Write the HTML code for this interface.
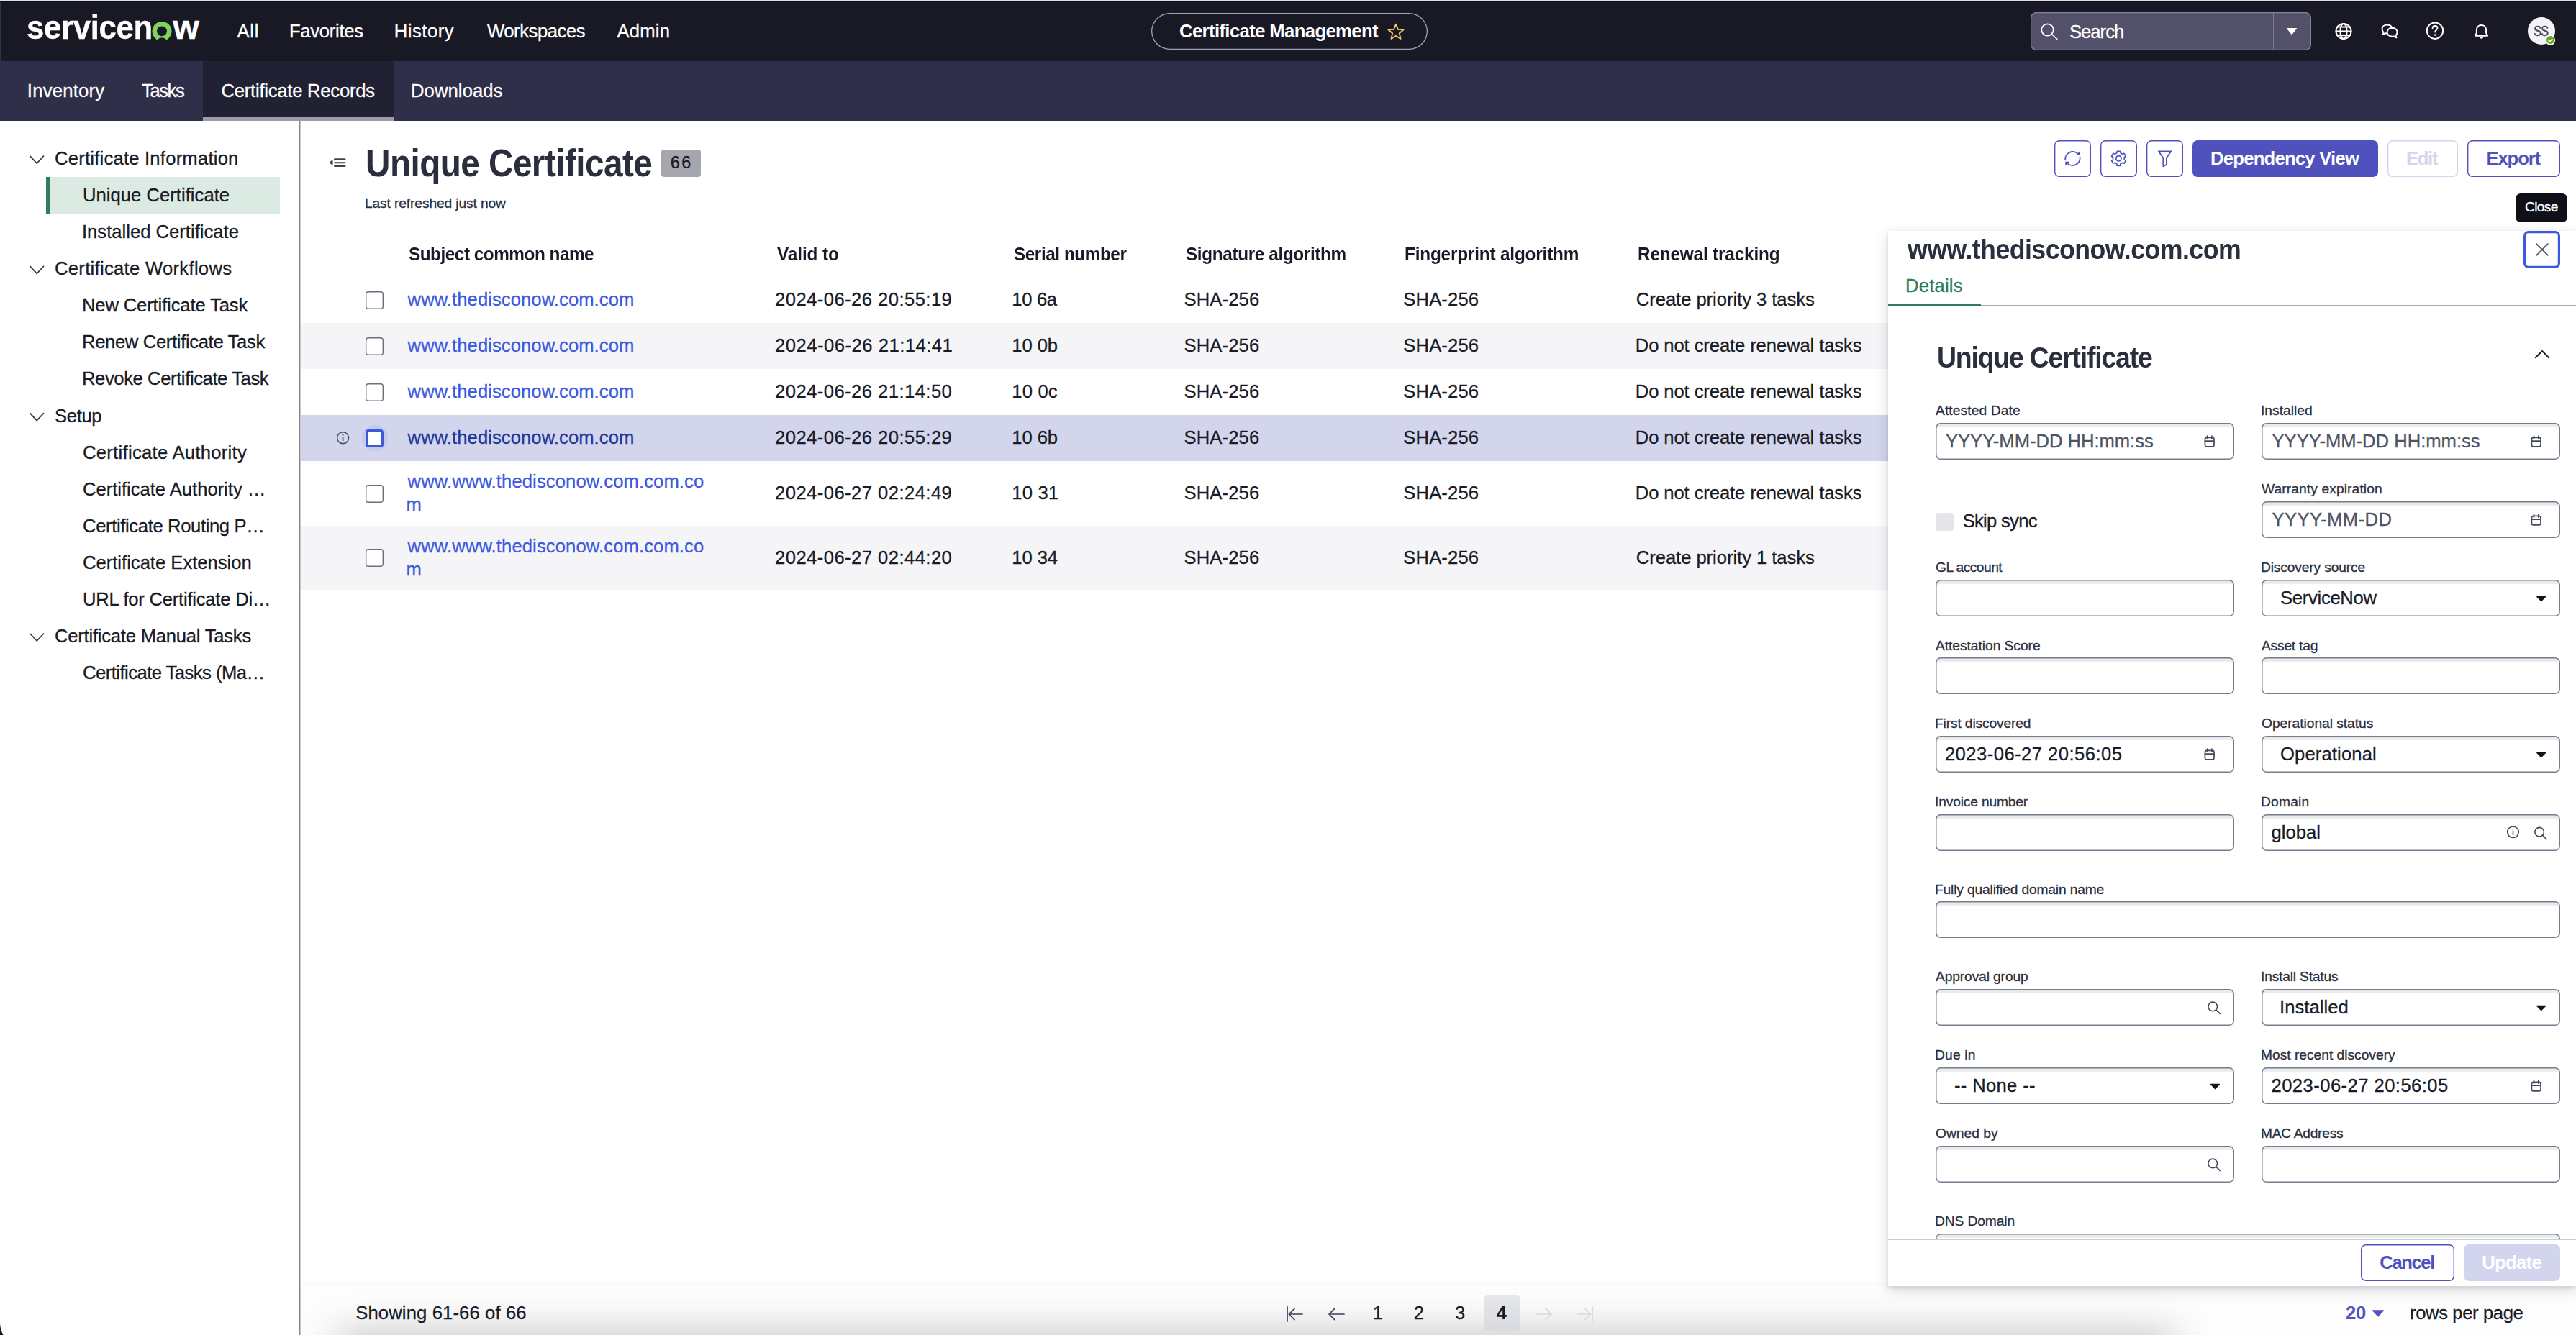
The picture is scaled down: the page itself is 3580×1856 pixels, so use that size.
<!DOCTYPE html>
<html lang="en"><head><meta charset="utf-8"><title>Unique Certificate | ServiceNow</title>
<style>

html,body{margin:0;padding:0;}
body{width:3580px;height:1856px;overflow:hidden;background:#fff;position:relative;font-family:'Liberation Sans',sans-serif;color:#181b26;}
.t{position:absolute;white-space:pre;font-family:'Liberation Sans',sans-serif;-webkit-text-stroke:0.3px currentColor;}
.b{position:absolute;box-sizing:border-box;}
.in{position:absolute;box-sizing:border-box;height:51px;border-radius:7px;background:#fff;box-shadow:inset 0 0 0 1.5px #767c8e,inset 0 5.8px 0 0 #e9ebeb;}
.cb{position:absolute;box-sizing:border-box;width:25px;height:25px;border-radius:4px;background:#fff;box-shadow:inset 0 0 0 1.4px #6b6f7c;}
.ib{position:absolute;box-sizing:border-box;height:51px;border-radius:7px;background:#fff;box-shadow:inset 0 0 0 1.4px #4f52bd;}
svg.ov{position:absolute;left:0;top:0;width:3580px;height:1856px;overflow:visible;}

</style></head>
<body>
<div class="b" style="left:0px;top:0px;width:3580px;height:2px;background:linear-gradient(180deg,#dddee0,#e8e9e9)"></div>
<div class="b" style="left:0px;top:2px;width:3580px;height:83px;background:#191926;border-top:1px solid #0b0b19"></div>
<div class="b" style="left:0px;top:3px;width:1px;height:165px;background:rgba(255,255,255,0.12)"></div>
<div class="b" style="left:0px;top:85px;width:3580px;height:83px;background:#2f2f49"></div>
<div class="b" style="left:282px;top:85px;width:265px;height:83px;background:#212134;border-bottom:6px solid #9c9cab"></div>
<span class="t" style="left:37.1px;top:8.3px;font-size:47px;line-height:60px;color:#fff;font-weight:700;-webkit-text-stroke:0;letter-spacing:-0.346px;transform:scaleX(0.93);transform-origin:0 0;-webkit-text-stroke:0.35px #fff;">servicen</span>
<span class="t" style="left:240.3px;top:8.3px;font-size:47px;line-height:60px;color:#fff;font-weight:700;-webkit-text-stroke:0;-webkit-text-stroke:0.35px #fff;">w</span>
<span class="t" style="left:329.5px;top:27.0px;font-size:25.6px;line-height:32px;color:#fff;letter-spacing:0.772px;">All</span>
<span class="t" style="left:402.0px;top:27.0px;font-size:25.6px;line-height:32px;color:#fff;letter-spacing:-0.282px;">Favorites</span>
<span class="t" style="left:547.7px;top:27.0px;font-size:25.6px;line-height:32px;color:#fff;letter-spacing:0.528px;">History</span>
<span class="t" style="left:677.0px;top:27.0px;font-size:25.6px;line-height:32px;color:#fff;letter-spacing:-0.416px;">Workspaces</span>
<span class="t" style="left:857.5px;top:27.0px;font-size:25.6px;line-height:32px;color:#fff;letter-spacing:0.222px;">Admin</span>
<span class="t" style="left:37.8px;top:110.1px;font-size:25.6px;line-height:32px;color:#fff;letter-spacing:0.253px;">Inventory</span>
<span class="t" style="left:197.0px;top:110.1px;font-size:25.6px;line-height:32px;color:#fff;letter-spacing:-1.406px;">Tasks</span>
<span class="t" style="left:307.5px;top:110.1px;font-size:25.6px;line-height:32px;color:#fff;letter-spacing:-0.229px;">Certificate Records</span>
<span class="t" style="left:571.0px;top:110.1px;font-size:25.6px;line-height:32px;color:#fff;letter-spacing:0.110px;">Downloads</span>
<div class="b" style="left:1600px;top:18px;width:384px;height:51px;box-shadow:inset 0 0 0 1.3px #a3a3b0;border-radius:26px"></div>
<span class="t" style="left:1639.0px;top:26.6px;font-size:25.6px;line-height:32px;color:#fff;font-weight:700;-webkit-text-stroke:0;letter-spacing:-0.581px;">Certificate Management</span>
<div class="b" style="left:2822px;top:17px;width:390px;height:53px;background:#535069;box-shadow:inset 0 0 0 1.2px #858399;border-radius:8px"></div>
<div class="b" style="left:3158.5px;top:18px;width:1.5px;height:51px;background:#7c7a90"></div>
<span class="t" style="left:2876.0px;top:28.0px;font-size:25.6px;line-height:32px;color:#fff;letter-spacing:-0.972px;">Search</span>
<div class="b" style="left:3513px;top:24px;width:38px;height:38px;background:#f3f3f7;border-radius:50%"></div>
<span class="t" style="left:3521.4px;top:29.9px;font-size:20.5px;line-height:26px;color:#3b4352;letter-spacing:-1.551px;transform:scaleX(0.82);transform-origin:0 0;">SS</span>
<div class="b" style="left:3537.7px;top:49.2px;width:13.4px;height:13.4px;background:#fff;border-radius:50%"></div>
<div class="b" style="left:3538.9px;top:50.4px;width:11px;height:11px;background:#62a82a;border-radius:50%"></div>
<div class="b" style="left:415px;top:168px;width:2px;height:1688px;background:#85858f"></div>
<div class="b" style="left:417px;top:168px;width:1px;height:1688px;background:#c9c9d2"></div>
<div class="b" style="left:64px;top:246px;width:325px;height:51px;background:#dbeae3"></div>
<div class="b" style="left:64px;top:246px;width:6px;height:51px;background:#2e7d5b"></div>
<span class="t" style="left:76.0px;top:204.0px;font-size:25.6px;line-height:32px;color:#181b26;letter-spacing:0.226px;">Certificate Information</span>
<span class="t" style="left:115.0px;top:255.1px;font-size:25.6px;line-height:32px;color:#181b26;letter-spacing:0.036px;">Unique Certificate</span>
<span class="t" style="left:114.0px;top:306.1px;font-size:25.6px;line-height:32px;color:#181b26;letter-spacing:0.014px;">Installed Certificate</span>
<span class="t" style="left:76.0px;top:357.2px;font-size:25.6px;line-height:32px;color:#181b26;letter-spacing:0.306px;">Certificate Workflows</span>
<span class="t" style="left:114.0px;top:408.3px;font-size:25.6px;line-height:32px;color:#181b26;letter-spacing:-0.135px;">New Certificate Task</span>
<span class="t" style="left:114.0px;top:459.4px;font-size:25.6px;line-height:32px;color:#181b26;letter-spacing:-0.335px;">Renew Certificate Task</span>
<span class="t" style="left:114.0px;top:510.4px;font-size:25.6px;line-height:32px;color:#181b26;letter-spacing:-0.397px;">Revoke Certificate Task</span>
<span class="t" style="left:76.0px;top:561.5px;font-size:25.6px;line-height:32px;color:#181b26;letter-spacing:-0.337px;">Setup</span>
<span class="t" style="left:115.0px;top:612.6px;font-size:25.6px;line-height:32px;color:#181b26;letter-spacing:0.294px;">Certificate Authority</span>
<span class="t" style="left:115.0px;top:663.6px;font-size:25.6px;line-height:32px;color:#181b26;letter-spacing:-0.011px;">Certificate Authority …</span>
<span class="t" style="left:115.0px;top:714.7px;font-size:25.6px;line-height:32px;color:#181b26;letter-spacing:-0.358px;">Certificate Routing P…</span>
<span class="t" style="left:115.0px;top:765.8px;font-size:25.6px;line-height:32px;color:#181b26;">Certificate Extension</span>
<span class="t" style="left:115.0px;top:816.8px;font-size:25.6px;line-height:32px;color:#181b26;letter-spacing:-0.226px;">URL for Certificate Di…</span>
<span class="t" style="left:76.0px;top:867.9px;font-size:25.6px;line-height:32px;color:#181b26;letter-spacing:-0.222px;">Certificate Manual Tasks</span>
<span class="t" style="left:115.0px;top:919.0px;font-size:25.6px;line-height:32px;color:#181b26;letter-spacing:-0.525px;">Certificate Tasks (Ma…</span>
<span class="t" style="left:507.6px;top:194.9px;font-size:53px;line-height:64px;color:#2a2e3d;font-weight:700;-webkit-text-stroke:0;letter-spacing:-0.617px;transform:scaleX(0.9);transform-origin:0 0;">Unique Certificate</span>
<div class="b" style="left:919px;top:208px;width:55px;height:38px;background:#a6a6ae;border-radius:4px"></div>
<span class="t" style="left:931.8px;top:212.1px;font-size:23.5px;line-height:29px;color:#181b26;letter-spacing:2.330px;">66</span>
<span class="t" style="left:507.0px;top:270.9px;font-size:19.2px;line-height:24px;color:#2a2e3d;letter-spacing:-0.115px;">Last refreshed just now</span>
<div class="ib" style="left:2855px;top:195px;width:51px;height:51px;"></div>
<div class="ib" style="left:2919px;top:195px;width:51px;height:51px;"></div>
<div class="ib" style="left:2983px;top:195px;width:51px;height:51px;"></div>
<div class="b" style="left:3047px;top:195px;width:258px;height:51px;background:#4f52bd;border-radius:7px"></div>
<span class="t" style="left:3072.0px;top:203.6px;font-size:25.6px;line-height:32px;color:#fff;font-weight:700;-webkit-text-stroke:0;letter-spacing:-0.732px;">Dependency View</span>
<div class="ib" style="left:3318px;top:195px;width:98px;height:51px;box-shadow:inset 0 0 0 1.4px #d3d4ee"></div>
<span class="t" style="left:3344.0px;top:203.6px;font-size:25.6px;line-height:32px;color:#d3d4ee;font-weight:700;-webkit-text-stroke:0;letter-spacing:-1.372px;">Edit</span>
<div class="ib" style="left:3429px;top:195px;width:129px;height:51px;"></div>
<span class="t" style="left:3455.4px;top:203.6px;font-size:25.6px;line-height:32px;color:#4f52bd;font-weight:700;-webkit-text-stroke:0;letter-spacing:-1.066px;">Export</span>
<div class="b" style="left:3496px;top:269px;width:72px;height:40px;background:#0f1017;border-radius:7px"></div>
<span class="t" style="left:3509.0px;top:276.2px;font-size:19.2px;line-height:24px;color:#fff;letter-spacing:-0.671px;">Close</span>
<div class="b" style="left:418px;top:449px;width:3162px;height:64px;background:#f5f5f7"></div>
<div class="b" style="left:418px;top:577px;width:3162px;height:64px;background:#d3d5ec"></div>
<div class="b" style="left:418px;top:731px;width:3162px;height:89px;background:#f5f5f7"></div>
<span class="t" style="left:568.0px;top:336.8px;font-size:25.6px;line-height:32px;color:#181b26;font-weight:700;-webkit-text-stroke:0;letter-spacing:-0.499px;transform:scaleX(0.95);transform-origin:0 0;">Subject common name</span>
<span class="t" style="left:1080.0px;top:336.8px;font-size:25.6px;line-height:32px;color:#181b26;font-weight:700;-webkit-text-stroke:0;letter-spacing:-0.085px;transform:scaleX(0.95);transform-origin:0 0;">Valid to</span>
<span class="t" style="left:1408.8px;top:336.8px;font-size:25.6px;line-height:32px;color:#181b26;font-weight:700;-webkit-text-stroke:0;letter-spacing:-0.464px;transform:scaleX(0.95);transform-origin:0 0;">Serial number</span>
<span class="t" style="left:1647.5px;top:336.8px;font-size:25.6px;line-height:32px;color:#181b26;font-weight:700;-webkit-text-stroke:0;letter-spacing:-0.376px;transform:scaleX(0.95);transform-origin:0 0;">Signature algorithm</span>
<span class="t" style="left:1951.8px;top:336.8px;font-size:25.6px;line-height:32px;color:#181b26;font-weight:700;-webkit-text-stroke:0;letter-spacing:-0.182px;transform:scaleX(0.95);transform-origin:0 0;">Fingerprint algorithm</span>
<span class="t" style="left:2276.1px;top:336.8px;font-size:25.6px;line-height:32px;color:#181b26;font-weight:700;-webkit-text-stroke:0;letter-spacing:-0.174px;transform:scaleX(0.95);transform-origin:0 0;">Renewal tracking</span>
<span class="t" style="left:566.6px;top:400.0px;font-size:25.6px;line-height:32px;color:#3c59e0;letter-spacing:0.081px;">www.thedisconow.com.com</span>
<span class="t" style="left:1077.0px;top:400.0px;font-size:25.6px;line-height:32px;color:#181b26;letter-spacing:0.454px;">2024-06-26 20:55:19</span>
<span class="t" style="left:1406.3px;top:400.0px;font-size:25.6px;line-height:32px;color:#181b26;letter-spacing:-0.328px;">10 6a</span>
<span class="t" style="left:1645.5px;top:400.0px;font-size:25.6px;line-height:32px;color:#181b26;letter-spacing:0.147px;">SHA-256</span>
<span class="t" style="left:1950.3px;top:400.0px;font-size:25.6px;line-height:32px;color:#181b26;letter-spacing:0.147px;">SHA-256</span>
<span class="t" style="left:2273.8px;top:400.0px;font-size:25.6px;line-height:32px;color:#181b26;letter-spacing:-0.042px;">Create priority 3 tasks</span>
<div class="cb" style="left:508px;top:404.59999999999997px;width:25px;height:25px;"></div>
<span class="t" style="left:566.6px;top:464.0px;font-size:25.6px;line-height:32px;color:#3c59e0;letter-spacing:0.081px;">www.thedisconow.com.com</span>
<span class="t" style="left:1077.0px;top:464.0px;font-size:25.6px;line-height:32px;color:#181b26;letter-spacing:0.510px;">2024-06-26 21:14:41</span>
<span class="t" style="left:1406.3px;top:464.0px;font-size:25.6px;line-height:32px;color:#181b26;letter-spacing:-0.078px;">10 0b</span>
<span class="t" style="left:1645.5px;top:464.0px;font-size:25.6px;line-height:32px;color:#181b26;letter-spacing:0.147px;">SHA-256</span>
<span class="t" style="left:1950.3px;top:464.0px;font-size:25.6px;line-height:32px;color:#181b26;letter-spacing:0.147px;">SHA-256</span>
<span class="t" style="left:2272.8px;top:464.0px;font-size:25.6px;line-height:32px;color:#181b26;letter-spacing:-0.098px;">Do not create renewal tasks</span>
<div class="cb" style="left:508px;top:468.59999999999997px;width:25px;height:25px;"></div>
<span class="t" style="left:566.6px;top:528.0px;font-size:25.6px;line-height:32px;color:#3c59e0;letter-spacing:0.081px;">www.thedisconow.com.com</span>
<span class="t" style="left:1077.0px;top:528.0px;font-size:25.6px;line-height:32px;color:#181b26;letter-spacing:0.454px;">2024-06-26 21:14:50</span>
<span class="t" style="left:1406.3px;top:528.0px;font-size:25.6px;line-height:32px;color:#181b26;letter-spacing:0.172px;">10 0c</span>
<span class="t" style="left:1645.5px;top:528.0px;font-size:25.6px;line-height:32px;color:#181b26;letter-spacing:0.147px;">SHA-256</span>
<span class="t" style="left:1950.3px;top:528.0px;font-size:25.6px;line-height:32px;color:#181b26;letter-spacing:0.147px;">SHA-256</span>
<span class="t" style="left:2272.8px;top:528.0px;font-size:25.6px;line-height:32px;color:#181b26;letter-spacing:-0.098px;">Do not create renewal tasks</span>
<div class="cb" style="left:508px;top:532.6px;width:25px;height:25px;"></div>
<span class="t" style="left:566.6px;top:592.0px;font-size:25.6px;line-height:32px;color:#21379b;letter-spacing:0.081px;">www.thedisconow.com.com</span>
<span class="t" style="left:1077.0px;top:592.0px;font-size:25.6px;line-height:32px;color:#181b26;letter-spacing:0.454px;">2024-06-26 20:55:29</span>
<span class="t" style="left:1406.3px;top:592.0px;font-size:25.6px;line-height:32px;color:#181b26;letter-spacing:-0.078px;">10 6b</span>
<span class="t" style="left:1645.5px;top:592.0px;font-size:25.6px;line-height:32px;color:#181b26;letter-spacing:0.147px;">SHA-256</span>
<span class="t" style="left:1950.3px;top:592.0px;font-size:25.6px;line-height:32px;color:#181b26;letter-spacing:0.147px;">SHA-256</span>
<span class="t" style="left:2272.8px;top:592.0px;font-size:25.6px;line-height:32px;color:#181b26;letter-spacing:-0.098px;">Do not create renewal tasks</span>
<div class="b" style="left:502.5px;top:591.1px;width:36px;height:36px;background:#c5c9ea;border-radius:50%"></div>
<div class="cb" style="left:508px;top:596.6px;width:25px;height:25px;box-shadow:inset 0 0 0 3.2px #3c59dd;border-radius:4px"></div>
<span class="t" style="left:566.6px;top:653.2px;font-size:25.6px;line-height:32px;color:#3c59e0;letter-spacing:0.118px;">www.www.thedisconow.com.com.co</span>
<span class="t" style="left:564.6px;top:685.2px;font-size:25.6px;line-height:32px;color:#3c59e0;">m</span>
<span class="t" style="left:1077.0px;top:669.2px;font-size:25.6px;line-height:32px;color:#181b26;letter-spacing:0.454px;">2024-06-27 02:24:49</span>
<span class="t" style="left:1406.3px;top:669.2px;font-size:25.6px;line-height:32px;color:#181b26;letter-spacing:0.172px;">10 31</span>
<span class="t" style="left:1645.5px;top:669.2px;font-size:25.6px;line-height:32px;color:#181b26;letter-spacing:0.147px;">SHA-256</span>
<span class="t" style="left:1950.3px;top:669.2px;font-size:25.6px;line-height:32px;color:#181b26;letter-spacing:0.147px;">SHA-256</span>
<span class="t" style="left:2272.8px;top:669.2px;font-size:25.6px;line-height:32px;color:#181b26;letter-spacing:-0.098px;">Do not create renewal tasks</span>
<div class="cb" style="left:508px;top:673.8000000000001px;width:25px;height:25px;"></div>
<span class="t" style="left:566.6px;top:742.6px;font-size:25.6px;line-height:32px;color:#3c59e0;letter-spacing:0.118px;">www.www.thedisconow.com.com.co</span>
<span class="t" style="left:564.6px;top:774.6px;font-size:25.6px;line-height:32px;color:#3c59e0;">m</span>
<span class="t" style="left:1077.0px;top:758.6px;font-size:25.6px;line-height:32px;color:#181b26;letter-spacing:0.454px;">2024-06-27 02:44:20</span>
<span class="t" style="left:1406.3px;top:758.6px;font-size:25.6px;line-height:32px;color:#181b26;letter-spacing:-0.078px;">10 34</span>
<span class="t" style="left:1645.5px;top:758.6px;font-size:25.6px;line-height:32px;color:#181b26;letter-spacing:0.147px;">SHA-256</span>
<span class="t" style="left:1950.3px;top:758.6px;font-size:25.6px;line-height:32px;color:#181b26;letter-spacing:0.147px;">SHA-256</span>
<span class="t" style="left:2273.8px;top:758.6px;font-size:25.6px;line-height:32px;color:#181b26;letter-spacing:-0.042px;">Create priority 1 tasks</span>
<div class="cb" style="left:508px;top:763.2px;width:25px;height:25px;"></div>
<div class="b" style="left:418px;top:1788px;width:3162px;height:68px;background:#fdfdfd;overflow:hidden;box-shadow:0 -3px 8px rgba(0,0,0,0.03)"><div class="b" style="left:45px;top:62px;width:2565px;height:60px;background:rgba(10,10,20,0.22);filter:blur(26px);border-radius:30px"></div></div>
<span class="t" style="left:494.3px;top:1808.5px;font-size:25.6px;line-height:32px;color:#181b26;letter-spacing:0.136px;">Showing 61-66 of 66</span>
<div class="b" style="left:2062px;top:1800px;width:51px;height:51px;background:linear-gradient(180deg,#e6e7eb,#d9dadf);border-radius:7px"></div>
<span class="t" style="left:1907.7px;top:1808.6px;font-size:25.6px;line-height:32px;color:#181b26;">1</span>
<span class="t" style="left:1964.7px;top:1808.6px;font-size:25.6px;line-height:32px;color:#181b26;">2</span>
<span class="t" style="left:2022.0px;top:1808.6px;font-size:25.6px;line-height:32px;color:#181b26;">3</span>
<span class="t" style="left:2079.8px;top:1808.6px;font-size:25.6px;line-height:32px;color:#181b26;font-weight:700;-webkit-text-stroke:0;">4</span>
<span class="t" style="left:3260.0px;top:1808.6px;font-size:25.6px;line-height:32px;color:#4f52bd;font-weight:700;-webkit-text-stroke:0;letter-spacing:-0.234px;">20</span>
<span class="t" style="left:3349.0px;top:1808.6px;font-size:25.6px;line-height:32px;color:#181b26;letter-spacing:-0.363px;">rows per page</span>
<svg class="ov" viewBox="0 0 3580 1856" fill="none" stroke-linecap="round" stroke-linejoin="round">
<path fill="#81d45b" fill-rule="evenodd" d="M225 30a13.5 13.5 0 1 0 .01 0ZM225 36.4a6.9 6.9 0 1 0 .01 0Z"/>
<path fill="#191926" d="M217 58C219.5 50.500 230.5 50.500 233 58Z"/><rect x="205" y="55.2" width="40" height="6" fill="#191926"/>
<polygon points="1940.0,33.6 1942.9,40.8 1950.7,41.3 1944.8,46.3 1946.6,53.9 1940.0,49.8 1933.4,53.9 1935.2,46.3 1929.3,41.3 1937.1,40.8" stroke="#f2c66d" stroke-width="1.8"/>
<g stroke="#fff" stroke-width="1.700"><circle cx="2845.500" cy="41.500" r="8.200"/><path d="M2851.500 47.500L2858.800 54.300"/></g>
<path fill="#fff" d="M3177.5 39h15l-7.5 9.5z"/>
<g stroke="#fff" stroke-width="2"><circle cx="3257" cy="43.4" r="10.5"/><ellipse cx="3257" cy="43.4" rx="4.6" ry="10.5"/><path d="M3246.5 43.4h21M3248.3 37.6h17.4M3248.3 49.2h17.4"/></g>
<g stroke="#fff" stroke-width="2"><path d="M3317.5 34.5c-4.2 0-7 2.6-7 6 0 1.8 .8 3.3 2.1 4.4l-.9 3.1 3.6-1.7c.7 .2 1.4 .2 2.2 .2"/><path d="M3317.5 34.5c3.6 0 6.4 2 6.9 4.8"/><path d="M3324.6 38.8c-4.1 0-7.1 2.6-7.100 6 0 3.400 3 6 7.100 6 .8 0 1.500-.1 2.200-.3l3.600 1.800-.9-3.200c1.300-1.100 2.100-2.600 2.100-4.300 0-3.400-2.900-6-7-6z"/></g>
<circle cx="3384" cy="42.7" r="11.2" stroke="#fff" stroke-width="2"/><path d="M3380.6 39.3c0-2 1.500-3.300 3.500-3.300s3.400 1.300 3.400 3c0 2.600-3.400 2.900-3.400 5.600" stroke="#fff" stroke-width="1.9"/><circle cx="3384.100" cy="48.6" r="1.250" fill="#fff"/>
<g stroke="#fff" stroke-width="2"><path d="M3448.5 35c-4 0-6.600 3-6.600 6.800v4.200l-1.900 3v.7h17v-.7l-1.900-3v-4.200c0-3.800-2.600-6.800-6.600-6.800z"/><path d="M3446.600 51.300c.3 1 1 1.500 1.900 1.500s1.600-.5 1.900-1.500"/></g>
<path d="M3541.800 56.100l1.800 1.700 3.200-3.500" stroke="#fff" stroke-width="1.600"/>
<path d="M41.900 217.1l9.300 10 9.300-10" stroke="#363c4d" stroke-width="1.700"/>
<path d="M41.900 370.3l9.300 10 9.300-10" stroke="#363c4d" stroke-width="1.700"/>
<path d="M41.900 574.6l9.300 10 9.300-10" stroke="#363c4d" stroke-width="1.700"/>
<path d="M41.900 881.0l9.300 10 9.300-10" stroke="#363c4d" stroke-width="1.700"/>
<path fill="#3c4252" d="M457.500 226l5-4.300v8.600z"/><path d="M465 221.300h14.500M465 226.200h14.500M465 231h14.500" stroke="#3c4252" stroke-width="2"/>
<g stroke="#4f52bd" stroke-width="1.800"><path d="M2870.200 222.300a10.300 10.300 0 0 1 18-7.800"/><path d="M2890.600 218.500a10.300 10.300 0 0 1-18 7.900"/></g><path fill="#4f52bd" d="M2890.500 210.300v5.700h-5.900zM2870.300 230.500v-5.700h5.900z"/>
<polygon points="2941.86,212.71 2942.17,210.24 2946.63,210.24 2946.94,212.71 2949.70,214.31 2951.99,213.34 2954.22,217.20 2952.24,218.71 2952.24,221.89 2954.22,223.40 2951.99,227.26 2949.70,226.29 2946.94,227.89 2946.63,230.36 2942.17,230.36 2941.86,227.89 2939.10,226.29 2936.81,227.26 2934.58,223.40 2936.56,221.89 2936.56,218.71 2934.58,217.20 2936.81,213.34 2939.10,214.31" stroke="#4f52bd" stroke-width="1.700"/><circle cx="2944.400" cy="220.300" r="3.700" stroke="#4f52bd" stroke-width="1.700"/>
<path d="M2999.800 210.300h17.600l-6.500 9.300v9.300l-4.600 2.300v-11.600z" stroke="#4f52bd" stroke-width="1.800"/>
<circle cx="476.600" cy="608.700" r="8" stroke="#464c5b" stroke-width="1.500"/><path d="M476.600 607.500v5" stroke="#464c5b" stroke-width="1.700"/><circle cx="476.600" cy="604.600" r="1.100" fill="#464c5b"/>
<g stroke="#3a4050" stroke-width="1.700"><path d="M1789 1816.800v20.200"/><path d="M1810 1827h-18.500M1799 1819.300l-7.700 7.700 7.700 7.700"/><path d="M1868 1827h-21M1854.700 1819.300l-7.700 7.700 7.700 7.700"/></g>
<g stroke="#d7d8dd" stroke-width="1.700"><path d="M2134.500 1827h21.500M2148.300 1819.300l7.700 7.700-7.700 7.700"/><path d="M2192 1827h18.500M2202.800 1819.300l7.700 7.700-7.700 7.700"/><path d="M2213 1816.800v20.200"/></g>
<path fill="#4f52bd" d="M3297.500 1821.300h15a.6 .6 0 0 1 .5 1l-7.500 8a.7 .7 0 0 1-1 0l-7.500-8a.6 .6 0 0 1 .5-1z"/>
</svg>
<div class="b" style="left:2624px;top:321px;width:956px;height:1467px;background:#fff;box-shadow:0 6px 19px rgba(20,22,40,0.14),0 3px 6px rgba(20,22,40,0.10)"></div>
<span class="t" style="left:2650.9px;top:322.9px;font-size:38.4px;line-height:48px;color:#2a2e3d;font-weight:700;-webkit-text-stroke:0;letter-spacing:-0.576px;transform:scaleX(0.93);transform-origin:0 0;">www.thedisconow.com.com</span>
<div class="b" style="left:3507px;top:321px;width:51px;height:52px;box-shadow:inset 0 0 0 3.2px #3c59e0;border-radius:7px;background:#fff"></div>
<span class="t" style="left:2648.0px;top:381.2px;font-size:25.6px;line-height:32px;color:#2e7d5b;letter-spacing:0.211px;">Details</span>
<div class="b" style="left:2624px;top:424px;width:956px;height:1px;background:#a4a8b7"></div>
<div class="b" style="left:2624px;top:422px;width:129px;height:3.5px;background:#2e7d5b"></div>
<span class="t" style="left:2691.9px;top:470.9px;font-size:41.5px;line-height:52px;color:#2a2e3d;font-weight:700;-webkit-text-stroke:0;letter-spacing:-1.297px;transform:scaleX(0.9);transform-origin:0 0;">Unique Certificate</span>
<span class="t" style="left:2690.0px;top:558.6px;font-size:19.2px;line-height:24px;color:#2a2e3d;letter-spacing:0.118px;">Attested Date</span>
<div class="in" style="left:2690px;top:588px;width:415px;"></div>
<span class="t" style="left:2704.0px;top:596.9px;font-size:25.6px;line-height:32px;color:#4d5463;letter-spacing:-0.018px;">YYYY-MM-DD HH:mm:ss</span>
<span class="t" style="left:3142.0px;top:558.6px;font-size:19.2px;line-height:24px;color:#2a2e3d;letter-spacing:0.026px;">Installed</span>
<div class="in" style="left:3143px;top:588px;width:415px;"></div>
<span class="t" style="left:3157.5px;top:596.9px;font-size:25.6px;line-height:32px;color:#4d5463;">YYYY-MM-DD HH:mm:ss</span>
<div class="b" style="left:2690px;top:713px;width:25px;height:25px;background:#e4e5ea;border-radius:4px"></div>
<span class="t" style="left:2727.7px;top:708.1px;font-size:25.6px;line-height:32px;color:#181b26;letter-spacing:-0.716px;">Skip sync</span>
<span class="t" style="left:3143.0px;top:667.6px;font-size:19.2px;line-height:24px;color:#2a2e3d;letter-spacing:0.113px;">Warranty expiration</span>
<div class="in" style="left:3143px;top:697px;width:415px;"></div>
<span class="t" style="left:3157.5px;top:705.9px;font-size:25.6px;line-height:32px;color:#4d5463;letter-spacing:0.433px;">YYYY-MM-DD</span>
<span class="t" style="left:2690.0px;top:776.6px;font-size:19.2px;line-height:24px;color:#2a2e3d;letter-spacing:-0.533px;">GL account</span>
<div class="in" style="left:2690px;top:806px;width:415px;"></div>
<span class="t" style="left:3142.0px;top:776.6px;font-size:19.2px;line-height:24px;color:#2a2e3d;letter-spacing:-0.138px;">Discovery source</span>
<div class="in" style="left:3143px;top:806px;width:415px;"></div>
<span class="t" style="left:3169.0px;top:814.6px;font-size:25.6px;line-height:32px;color:#181b26;letter-spacing:-0.284px;">ServiceNow</span>
<span class="t" style="left:2690.0px;top:885.6px;font-size:19.2px;line-height:24px;color:#2a2e3d;letter-spacing:-0.034px;">Attestation Score</span>
<div class="in" style="left:2690px;top:914px;width:415px;"></div>
<span class="t" style="left:3143.0px;top:885.6px;font-size:19.2px;line-height:24px;color:#2a2e3d;letter-spacing:-0.203px;">Asset tag</span>
<div class="in" style="left:3143px;top:914px;width:415px;"></div>
<span class="t" style="left:2689.0px;top:994.3px;font-size:19.2px;line-height:24px;color:#2a2e3d;letter-spacing:-0.130px;">First discovered</span>
<div class="in" style="left:2690px;top:1023px;width:415px;"></div>
<span class="t" style="left:2702.9px;top:1031.9px;font-size:25.6px;line-height:32px;color:#181b26;letter-spacing:0.471px;">2023-06-27 20:56:05</span>
<span class="t" style="left:3143.0px;top:994.3px;font-size:19.2px;line-height:24px;color:#2a2e3d;letter-spacing:-0.025px;">Operational status</span>
<div class="in" style="left:3143px;top:1023px;width:415px;"></div>
<span class="t" style="left:3169.0px;top:1031.6px;font-size:25.6px;line-height:32px;color:#181b26;letter-spacing:0.137px;">Operational</span>
<span class="t" style="left:2689.0px;top:1103.1px;font-size:19.2px;line-height:24px;color:#2a2e3d;letter-spacing:-0.153px;">Invoice number</span>
<div class="in" style="left:2690px;top:1132px;width:415px;"></div>
<span class="t" style="left:3142.0px;top:1103.1px;font-size:19.2px;line-height:24px;color:#2a2e3d;letter-spacing:0.231px;">Domain</span>
<div class="in" style="left:3143px;top:1132px;width:415px;"></div>
<span class="t" style="left:3156.5px;top:1140.9px;font-size:25.6px;line-height:32px;color:#181b26;letter-spacing:0.016px;">global</span>
<span class="t" style="left:2689.0px;top:1225.2px;font-size:19.2px;line-height:24px;color:#2a2e3d;letter-spacing:-0.140px;">Fully qualified domain name</span>
<div class="in" style="left:2690px;top:1253px;width:868px;"></div>
<span class="t" style="left:2690.0px;top:1346.3px;font-size:19.2px;line-height:24px;color:#2a2e3d;letter-spacing:-0.113px;">Approval group</span>
<div class="in" style="left:2690px;top:1375px;width:415px;"></div>
<span class="t" style="left:3142.0px;top:1346.3px;font-size:19.2px;line-height:24px;color:#2a2e3d;letter-spacing:-0.174px;">Install Status</span>
<div class="in" style="left:3143px;top:1375px;width:415px;"></div>
<span class="t" style="left:3168.0px;top:1383.6px;font-size:25.6px;line-height:32px;color:#181b26;letter-spacing:0.063px;">Installed</span>
<span class="t" style="left:2689.0px;top:1455.1px;font-size:19.2px;line-height:24px;color:#2a2e3d;letter-spacing:0.181px;">Due in</span>
<div class="in" style="left:2690px;top:1484px;width:415px;"></div>
<span class="t" style="left:2716.0px;top:1492.6px;font-size:25.6px;line-height:32px;color:#181b26;letter-spacing:0.336px;">-- None --</span>
<span class="t" style="left:3142.0px;top:1455.1px;font-size:19.2px;line-height:24px;color:#2a2e3d;">Most recent discovery</span>
<div class="in" style="left:3143px;top:1484px;width:415px;"></div>
<span class="t" style="left:3156.5px;top:1492.9px;font-size:25.6px;line-height:32px;color:#181b26;letter-spacing:0.449px;">2023-06-27 20:56:05</span>
<span class="t" style="left:2690.0px;top:1563.6px;font-size:19.2px;line-height:24px;color:#2a2e3d;letter-spacing:0.029px;">Owned by</span>
<div class="in" style="left:2690px;top:1593px;width:415px;"></div>
<span class="t" style="left:3142.0px;top:1563.6px;font-size:19.2px;line-height:24px;color:#2a2e3d;letter-spacing:-0.276px;">MAC Address</span>
<div class="in" style="left:3143px;top:1593px;width:415px;"></div>
<span class="t" style="left:2689.0px;top:1686.0px;font-size:19.2px;line-height:24px;color:#2a2e3d;letter-spacing:-0.099px;">DNS Domain</span>
<div class="in" style="left:2690px;top:1715px;width:868px;clip-path:inset(0 0 42px 0);"></div>
<div class="b" style="left:2624px;top:1723px;width:956px;height:65px;background:#fff;border-top:1.5px solid #c9ccd6"></div>
<div class="ib" style="left:3281px;top:1730px;width:130px;height:51px;"></div>
<span class="t" style="left:3307.3px;top:1738.6px;font-size:25.6px;line-height:32px;color:#4f52bd;font-weight:700;-webkit-text-stroke:0;letter-spacing:-1.384px;">Cancel</span>
<div class="b" style="left:3424px;top:1730px;width:134px;height:51px;background:#d3d5ee;border-radius:7px"></div>
<span class="t" style="left:3449.3px;top:1738.6px;font-size:25.6px;line-height:32px;color:#fff;font-weight:700;-webkit-text-stroke:0;letter-spacing:-0.701px;">Update</span>
<svg class="ov" viewBox="0 0 3580 1856" fill="none" stroke-linecap="round" stroke-linejoin="round">
<path d="M3525.200 339.200l15.600 15.600M3540.800 339.200l-15.600 15.600" stroke="#4a5060" stroke-width="1.700"/>
<path d="M3523.800 497.300l9.200-9.300 9.200 9.300" stroke="#1c1f2b" stroke-width="2"/>
<g stroke="#434a5b" stroke-width="1.700"><rect x="3064.4" y="608.4" width="12.600" height="12.400" rx="2.400"/><path d="M3064.4 613.1h12.600M3067.5 606.2v4M3073.9 606.2v4"/></g>
<g stroke="#434a5b" stroke-width="1.700"><rect x="3518.4" y="608.4" width="12.600" height="12.400" rx="2.400"/><path d="M3518.4 613.1h12.600M3521.5 606.2v4M3527.9 606.2v4"/></g>
<g stroke="#434a5b" stroke-width="1.700"><rect x="3518.4" y="717.4" width="12.600" height="12.400" rx="2.400"/><path d="M3518.4 722.1h12.600M3521.5 715.2v4M3527.9 715.2v4"/></g>
<path fill="#12141c" stroke="#12141c" stroke-width="1.500" d="M3525.9 829.4h11.600l-5.800 6.200z"/>
<g stroke="#434a5b" stroke-width="1.700"><rect x="3064.4" y="1043.4" width="12.600" height="12.400" rx="2.400"/><path d="M3064.4 1048.1h12.600M3067.5 1041.2v4M3073.9 1041.2v4"/></g>
<path fill="#12141c" stroke="#12141c" stroke-width="1.500" d="M3525.9 1046.4h11.600l-5.800 6.200z"/>
<circle cx="3492.5" cy="1156.7" r="7.800" stroke="#3f4656" stroke-width="1.500"/><path d="M3492.5 1155.5v5" stroke="#3f4656" stroke-width="1.600"/><circle cx="3492.5" cy="1152.7" r="1.050" fill="#3f4656"/>
<g stroke="#3f4656" stroke-width="1.600"><circle cx="3529.1" cy="1156.7" r="6.300"/><path d="M3533.8 1161.4l5.300 5.300"/></g>
<g stroke="#3f4656" stroke-width="1.600"><circle cx="3075.2" cy="1399.4" r="6.300"/><path d="M3079.9 1404.1l5.300 5.300"/></g>
<path fill="#12141c" stroke="#12141c" stroke-width="1.500" d="M3525.9 1398.4h11.600l-5.800 6.200z"/>
<path fill="#12141c" stroke="#12141c" stroke-width="1.500" d="M3072.7 1507.4h11.600l-5.800 6.200z"/>
<g stroke="#434a5b" stroke-width="1.700"><rect x="3518.4" y="1504.4" width="12.600" height="12.400" rx="2.400"/><path d="M3518.4 1509.1h12.600M3521.5 1502.2v4M3527.9 1502.2v4"/></g>
<g stroke="#3f4656" stroke-width="1.600"><circle cx="3075.2" cy="1617.4" r="6.300"/><path d="M3079.9 1622.1l5.300 5.300"/></g>
</svg>
<svg class="ov" viewBox="0 0 3580 1856"><path fill="#0d1a27" d="M0 1856v-15.500c.5 6 2 11 4.500 15.500z"/></svg>
</body></html>
